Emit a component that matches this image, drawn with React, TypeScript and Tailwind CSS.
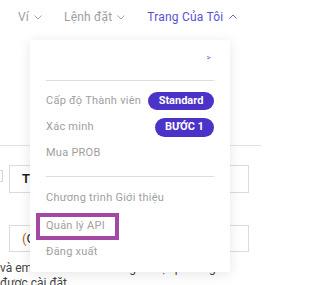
import React from 'react';

const Chevron: React.FC<{ up?: boolean; className?: string }> = ({ up, className }) => (
  <svg width="8" height="5" viewBox="0 0 8 5" className={className} fill="none">
    <path
      d={up ? 'M0.5 4.5 L4 1 L7.5 4.5' : 'M0.5 0.5 L4 4 L7.5 0.5'}
      stroke="currentColor"
      strokeWidth="0.9"
    />
  </svg>
);

const App: React.FC = () => {
  return (
    <div className="relative w-[261px] h-[285px] overflow-hidden bg-white font-['Roboto',sans-serif]">
      {/* Top nav */}
      <nav className="flex items-center h-[33px] pl-[18px] text-[12px] tracking-[0.2px] text-[#9e9e9e]">
        <div className="flex items-center">
          Ví
          <Chevron className="ml-[5px] mt-[1px]" />
        </div>
        <div className="flex items-center ml-[22px]">
          Lệnh đặt
          <Chevron className="ml-[5px] mt-[1px]" />
        </div>
        <div className="flex items-center ml-[22px] text-[#5b50d6]">
          Trang Của Tôi
          <Chevron up className="ml-[6px] -mt-[1px]" />
        </div>
      </nav>

      {/* Page content behind the menu */}
      <div className="mt-[112px] border-t border-[#e2e2e2]" />
      <div className="flex items-start mt-[19px]">
        <div className="mt-[5px] w-[3px] h-[12px] border border-l-0 border-[#d6d6d6]" />
        <div className="ml-[6px] w-[240px] h-[28px] border border-[#dcdcdc] flex items-center pl-[12px] text-[13px] font-semibold text-[#1b1b1b]">
          Tiếng Việt
        </div>
      </div>
      <div className="ml-[9px] mt-[32px] w-[240px] h-[27px] border border-[#dcdcdc] flex items-center pl-[12px] text-[13px] text-[#1b1b1b]">
        <span className="text-[#b5651d]">(</span>GMT+07:00) Bangkok
      </div>
      <div className="mt-[9px] text-[12px] leading-[15px] text-[#444]">
        <p className="whitespace-nowrap">và email tới ProBit. Thời gian địa phương</p>
        <p className="whitespace-nowrap">được cài đặt</p>
      </div>

      {/* Dropdown menu */}
      <div className="absolute left-[30px] top-[40px] w-[200px] h-[232px] bg-white shadow-[0_2px_12px_rgba(0,0,0,0.10)] px-[16px] text-[11px] tracking-[0.25px] text-[#a0a0a0]">
        <div className="flex justify-end h-[40px] pt-[14px] pr-[3px] text-[8px] text-[#5b50d6] leading-none">
          &gt;
        </div>
        <div className="border-t border-[#dddddd]" />
        <div className="flex items-center justify-between mt-[11px] h-[18px]">
          <span>Cấp độ Thành viên</span>
          <span className="rounded-full bg-[#4a33c6] text-white font-bold tracking-normal text-[11px] h-[18px] w-[66px] flex items-center justify-center">
            Standard
          </span>
        </div>
        <div className="flex items-center justify-between mt-[8px] h-[19px]">
          <span>Xác minh</span>
          <span className="rounded-full bg-[#4a33c6] text-white font-bold tracking-normal text-[11px] h-[19px] w-[59px] flex items-center justify-center">
            BƯỚC 1
          </span>
        </div>
        <div className="mt-[7px] h-[18px] flex items-center">Mua PROB</div>
        <div className="mt-[14px] border-t border-[#dddddd]" />
        <div className="mt-[12px] h-[18px] flex items-center">Chương trình Giới thiệu</div>
        <div className="-ml-[10px] mt-[6px] w-[83px] h-[27px] border-[4px] border-[#a349a4] flex items-center pl-[6px]">
          Quản lý API
        </div>
        <div className="mt-[3px] h-[18px] flex items-center">Đăng xuất</div>
      </div>
    </div>
  );
};

export default App;
